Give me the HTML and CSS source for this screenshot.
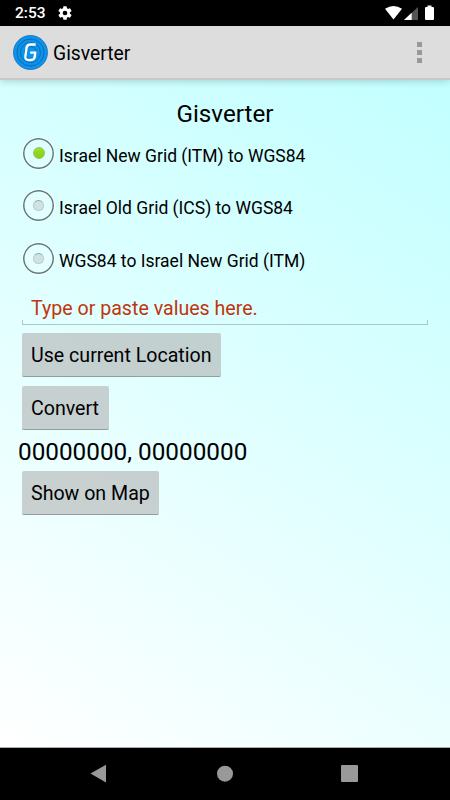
FILE: index.html
```
<!DOCTYPE html>
<html lang="en">
<head>
    <meta charset="UTF-8">
    <meta name="viewport" content="width=device-width, initial-scale=1.0">
    <title>Gisverter</title>
    <link rel="stylesheet" href="styles.css">
</head>
<body>

    <div class="status-bar">
        <span class="clock">2:53</span>
        <svg class="gear" width="16" height="16" viewBox="0 0 24 24">
            <path fill="#fff" fill-rule="evenodd" d="M19.4 13a7.500 7.500 0 0 0 0-2l2.200-1.700a.5.5 0 0 0 .1-.6l-2-3.500a.5.5 0 0 0-.6-.2l-2.500 1a7.300 7.300 0 0 0-1.700-1l-.4-2.600a.5.5 0 0 0-.5-.4h-4a.5.5 0 0 0-.5.4L9.100 5a7.700 7.700 0 0 0-1.700 1l-2.500-1a.5.5 0 0 0-.6.200l-2 3.500a.5.5 0 0 0 .1.600L4.600 11a8 8 0 0 0 0 2l-2.200 1.700a.5.5 0 0 0-.1.600l2 3.500c.1.200.4.300.6.200l2.500-1a7.300 7.300 0 0 0 1.700 1l.4 2.600c0 .2.200.4.500.4h4c.3 0 .5-.2.500-.4l.4-2.600a7.700 7.700 0 0 0 1.700-1l2.500 1c.2.100.5 0 .6-.2l2-3.500a.5.5 0 0 0-.1-.6zM12 15.500a3.500 3.500 0 1 1 0-7 3.500 3.500 0 0 1 0 7z"/>
        </svg>
        <svg class="signals" width="50" height="16" viewBox="0 0 50 16">
            <path fill="#fff" d="M0 3.700Q8.500-1.600 17 3.700L8.500 14.500z"/>
            <path fill="#555" d="M33 2v13H19z"/>
            <path fill="#fff" d="M26.700 7.800V15H19z"/>
            <path fill="#fff" d="M42.500 .5h4V2h1.500q1 0 1 1V14q0 1-1 1h-7q-1 0-1-1V3q0-1 1-1h1.500z"/>
        </svg>
    </div>

    <div class="action-bar">
        <svg width="36" height="36" viewBox="0 0 36 36">
            <circle cx="18.500" cy="18.500" r="17" fill="#0b93ee" stroke="#176eaa" stroke-width=".8"/>
            <g fill="none" stroke="#08578f" stroke-width=".7">
                <circle cx="18.500" cy="18.500" r="13.500"/>
                <circle cx="18.500" cy="18.500" r="10"/>
                <circle cx="18.500" cy="18.500" r="6"/>
            </g>
            <path d="M23.700 10.500H18.500Q15 10.500 14.500 14L13.400 22Q12.800 26 16.500 26H18.800Q22.300 26 22.800 22.500L23.300 18.700H18.200" fill="none" stroke="#fff" stroke-width="2.300"/>
        </svg>
        <span class="app-name">Gisverter</span>
        <div class="overflow"><i></i><i></i><i></i></div>
    </div>

    <div class="content">
        <h1 class="title">Gisverter</h1>

        <div class="radios">
            <div class="radio checked"><span class="ring"><i></i></span><span class="radio-text">Israel New Grid (ITM) to WGS84</span></div>
            <div class="radio"><span class="ring"><i></i></span><span class="radio-text">Israel Old Grid (ICS) to WGS84</span></div>
            <div class="radio"><span class="ring"><i></i></span><span class="radio-text">WGS84 to Israel New Grid (ITM)</span></div>
        </div>

        <div class="field">
            <span>Type or paste values here.</span>
        </div>
        <button class="btn btn-location">Use current Location</button>
        <button class="btn btn-convert">Convert</button>
        <div class="result">00000000, 00000000</div>
        <button class="btn btn-map">Show on Map</button>
    </div>

    <div class="nav-bar">
        <svg width="20" height="20" viewBox="0 0 20 20"><path fill="#999" d="M1.500 9.500L17 .7V18.500z"/></svg>
        <svg width="20" height="20" viewBox="0 0 20 20"><circle cx="11" cy="9.700" r="8" fill="#999"/></svg>
        <svg width="20" height="20" viewBox="0 0 20 20"><rect x="2" y="1" width="17" height="17" rx="1" fill="#999"/></svg>
    </div>

</body>
</html>
```
FILE: styles.css
```
body {
    font-family: Roboto, sans-serif;
    margin: 0;
    width: 450px;
    height: 800px;
    display: flex;
    flex-direction: column;
    overflow: hidden;
    color: #000;
    background-color: #000;
}

.status-bar {
    height: 26px;
    box-sizing: border-box;
    padding: 0 15px;
    display: flex;
    align-items: center;
    color: #fff;
}

.clock {
    width: 42px;
    font-size: 15.5px;
    font-weight: 500;
    line-height: 26px;
}

.gear {
    display: block;
}

.signals {
    margin-left: auto;
}

.action-bar {
    height: 54px;
    box-sizing: border-box;
    padding: 0 28px 0 12px;
    display: flex;
    align-items: center;
    background-color: #ddd;
    border-bottom: 2px solid #c9c9c9;
    box-shadow: 0 1px 8px rgba(0, 0, 0, 0.2);
    z-index: 1;
}

.app-name {
    margin: 2px 0 0 5px;
    font-size: 19.3px;
}

.overflow {
    margin-left: auto;
    display: flex;
    flex-direction: column;
    gap: 3px;
}

.overflow i {
    width: 5px;
    height: 5px;
    background-color: #999;
}

.content {
    flex: 1;
    display: flex;
    flex-direction: column;
    align-items: flex-start;
    box-sizing: border-box;
    padding: 20px 22px 0;
    background: linear-gradient(34deg, #fff, #c2ffff);
    border-bottom: 1px solid #aaa;
}

.title {
    align-self: center;
    margin: 0;
    font-size: 24.2px;
    font-weight: 400;
    line-height: 29px;
}

.radios {
    margin-top: -2px;
}

.radio {
    height: 52.5px;
    display: flex;
    align-items: center;
}

.ring {
    width: 33px;
    height: 33px;
    box-sizing: border-box;
    display: flex;
    align-items: center;
    justify-content: center;
    border: 1px solid rgba(255, 255, 255, 0.5);
    border-radius: 50%;
    background-color: rgba(255, 255, 255, 0.2);
    box-shadow: inset 0 0 0 1.5px #60787a;
}

.ring i {
    width: 9px;
    height: 9px;
    border: 1px solid #b9cccc;
    border-top-color: #94a8a8;
    border-radius: 50%;
    background-color: #cfe3e3;
}

.checked .ring i {
    width: 10px;
    height: 10px;
    border-color: #9bbf77;
    background: linear-gradient(#9ade2c, #86d00c);
}

.radio-text {
    margin: 5px 0 0 4px;
    font-size: 17.5px;
}

.field {
    width: 406px;
    height: 40px;
    box-sizing: border-box;
    padding: 11px 9px 0;
    color: #bf360c;
    font-size: 19.6px;
    line-height: 26px;
    background:
        linear-gradient(#aac6c6, #aac6c6) left bottom / 1px 5px no-repeat,
        linear-gradient(#aac6c6, #aac6c6) right bottom / 1px 5px no-repeat,
        linear-gradient(#aac6c6, #aac6c6) left bottom / 100% 1px no-repeat;
}

.btn {
    height: 44px;
    padding: 3px 0 0 9px;
    border: 0;
    border-bottom: 1px solid #8f9f9f;
    border-radius: 2px;
    background-color: rgba(176, 176, 176, 0.6);
    font-family: inherit;
    font-size: 19.6px;
    text-align: left;
    color: #000;
}

.btn-location {
    width: 199px;
    margin-top: 8px;
}

.btn-convert {
    width: 87px;
    margin-top: 9px;
}

.btn-map {
    width: 137px;
    margin-top: 5px;
}

.result {
    margin: 7px 0 0 -4px;
    font-size: 24.3px;
    line-height: 29px;
}

.nav-bar {
    height: 52px;
    box-sizing: border-box;
    padding: 0 91px 0 89px;
    display: flex;
    align-items: center;
    justify-content: space-between;
}
```
